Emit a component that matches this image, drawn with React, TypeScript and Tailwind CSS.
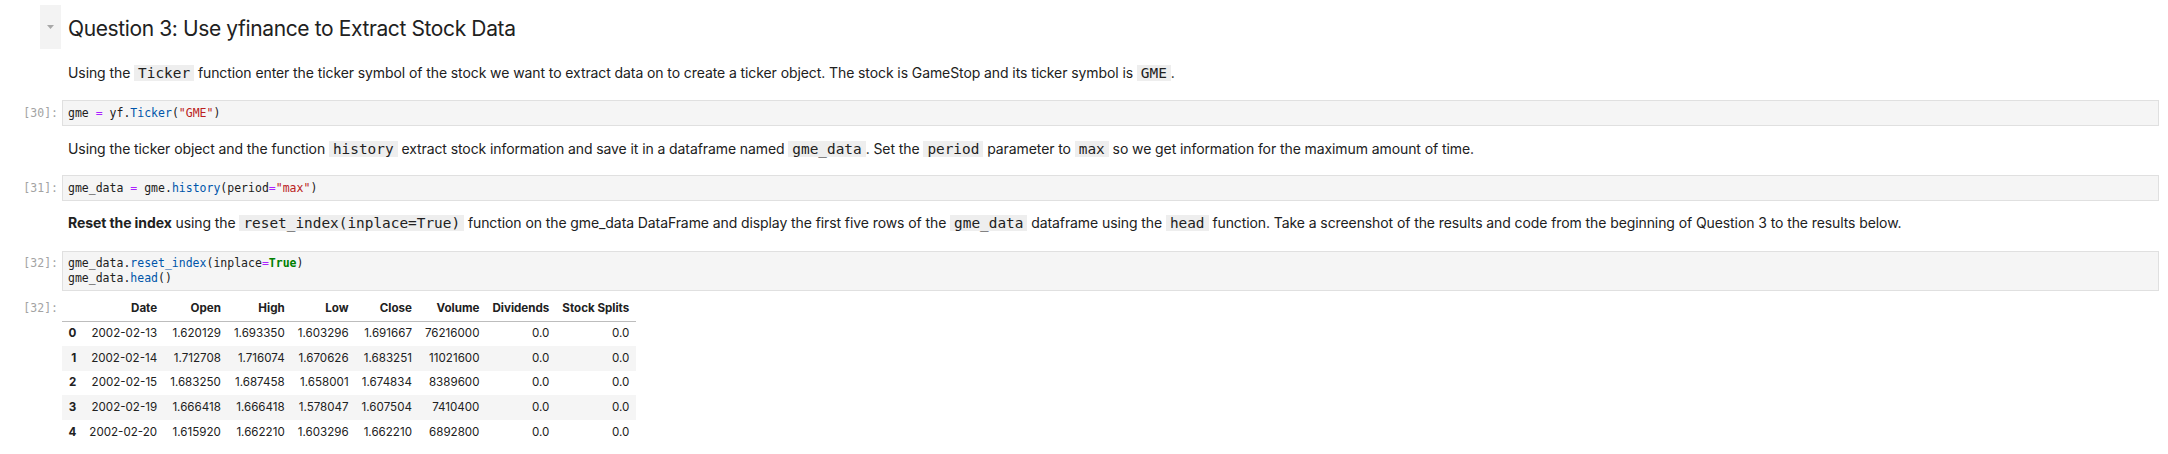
import type { ReactNode } from 'react'

const sans = "font-['Inter','Noto_Sans',sans-serif]"
const mono = "font-['DejaVu_Sans_Mono','Liberation_Mono',monospace]"

const ROWS = [
  ['0', '2002-02-13', '1.620129', '1.693350', '1.603296', '1.691667', '76216000', '0.0', '0.0'],
  ['1', '2002-02-14', '1.712708', '1.716074', '1.670626', '1.683251', '11021600', '0.0', '0.0'],
  ['2', '2002-02-15', '1.683250', '1.687458', '1.658001', '1.674834', '8389600', '0.0', '0.0'],
  ['3', '2002-02-19', '1.666418', '1.666418', '1.578047', '1.607504', '7410400', '0.0', '0.0'],
  ['4', '2002-02-20', '1.615920', '1.662210', '1.603296', '1.662210', '6892800', '0.0', '0.0'],
]

const HEADERS = ['', 'Date', 'Open', 'High', 'Low', 'Close', 'Volume', 'Dividends', 'Stock Splits']

// inline `code` inside markdown text
function Code({ children }: { children: ReactNode }) {
  return (
    <code className={`${mono} bg-[#eeeeee] px-[4px] text-[14.4px] tracking-normal text-[#212121]`}>{children}</code>
  )
}

function Prompt({ n, className = '' }: { n: number; className?: string }) {
  return (
    <div className={`${mono} w-[62px] shrink-0 pr-[4px] text-right text-[11.5px] text-[#a3a3a3] ${className}`}>
      [{n}]:
    </div>
  )
}

function CodeCell({ n, lines }: { n: number; lines: ReactNode[] }) {
  const single = lines.length === 1
  return (
    <div className="flex">
      <Prompt n={n} className={single ? 'leading-[14px] pt-[6px]' : 'leading-[15px] pt-[5px]'} />
      <div
        className={`${mono} flex-1 border border-[#e0e0e0] bg-[#f5f5f5] pl-[5px] text-[11.5px] text-[#212121] whitespace-pre ${
          single ? 'py-[5px] leading-[14px]' : 'py-[4px] leading-[15px]'
        }`}
      >
        {lines.map((l, i) => (
          <div key={i}>{l}</div>
        ))}
      </div>
    </div>
  )
}

const Op = () => <span className="text-[#aa22ff]">=</span>
const Fn = ({ children }: { children: ReactNode }) => <span className="text-[#0055aa]">{children}</span>
const Str = ({ children }: { children: ReactNode }) => <span className="text-[#ba2121]">{children}</span>

export default function App() {
  return (
    <div className={`${sans} h-[454px] w-[2168px] overflow-hidden bg-white pr-[9px] pt-[5px] text-[#212121]`}>
      {/* heading cell */}
      <div className="flex">
        <div className="flex w-[62px] shrink-0 justify-end pr-[1px]">
          <div className="flex h-[44px] w-[21px] items-center justify-center bg-[#f3f3f3]">
            <svg width="7" height="4" viewBox="0 0 7 4">
              <path d="M0 0h7L3.5 4z" fill="#a8a8a8" />
            </svg>
          </div>
        </div>
        <h2 className="pl-[6px] pt-[2px] text-[21px] leading-[44px] font-normal tracking-[-0.38px]">
          Question 3: Use yfinance to Extract Stock Data
        </h2>
      </div>

      <div className="mt-[12px] flex">
        <div className="w-[62px] shrink-0" />
        <p className="pl-[6px] text-[14px] leading-[20px] tracking-[-0.09px]">
          Using the <Code>Ticker</Code> function enter the ticker symbol of the stock we want to extract data on to
          create a ticker object. The stock is GameStop and its ticker symbol is <Code>GME</Code>.
        </p>
      </div>

      <div className="mt-[17px]">
        <CodeCell
          n={30}
          lines={[
            <>
              gme <Op /> yf.<Fn>Ticker</Fn>(<Str>"GME"</Str>)
            </>,
          ]}
        />
      </div>

      <div className="mt-[13px] flex">
        <div className="w-[62px] shrink-0" />
        <p className="pl-[6px] text-[14px] leading-[20px] tracking-[-0.09px]">
          Using the ticker object and the function <Code>history</Code> extract stock information and save it in a
          dataframe named <Code>gme_data</Code>. Set the <Code>period</Code> parameter to <Code>max</Code> so we get
          information for the maximum amount of time.
        </p>
      </div>

      <div className="mt-[16px]">
        <CodeCell
          n={31}
          lines={[
            <>
              gme_data <Op /> gme.<Fn>history</Fn>(period<Op />
              <Str>"max"</Str>)
            </>,
          ]}
        />
      </div>

      <div className="mt-[12px] flex">
        <div className="w-[62px] shrink-0" />
        <p className="pl-[6px] text-[14px] leading-[20px] tracking-[-0.09px]">
          <b className="font-bold">Reset the index</b> using the <Code>reset_index(inplace=True)</Code> function on the
          gme_data DataFrame and display the first five rows of the <Code>gme_data</Code> dataframe using the{' '}
          <Code>head</Code> function. Take a screenshot of the results and code from the beginning of Question 3 to the
          results below.
        </p>
      </div>

      <div className="mt-[18px]">
        <CodeCell
          n={32}
          lines={[
            <>
              gme_data.<Fn>reset_index</Fn>(inplace<Op />
              <span className="font-bold text-[#008000]">True</span>)
            </>,
            <>
              gme_data.<Fn>head</Fn>()
            </>,
          ]}
        />
      </div>

      {/* output */}
      <div className="mt-[5px] flex">
        <Prompt n={32} className="leading-[25px]" />
        <table className="border-collapse text-[11.6px] text-[#212121]">
          <thead>
            <tr className="h-[25px] border-b border-[#bdbdbd]">
              {HEADERS.map((h, i) => (
                <th key={i} className="whitespace-nowrap px-[6.5px] text-right font-bold">
                  {h}
                </th>
              ))}
            </tr>
          </thead>
          <tbody>
            {ROWS.map((r, ri) => (
              <tr key={ri} className={`h-[24.8px] ${ri % 2 === 1 ? 'bg-[#f5f5f5]' : ''}`}>
                {r.map((c, ci) => (
                  <td
                    key={ci}
                    className={`whitespace-nowrap px-[6.5px] text-right ${ci === 0 ? 'font-bold' : ''}`}
                  >
                    {c}
                  </td>
                ))}
              </tr>
            ))}
          </tbody>
        </table>
      </div>
    </div>
  )
}
